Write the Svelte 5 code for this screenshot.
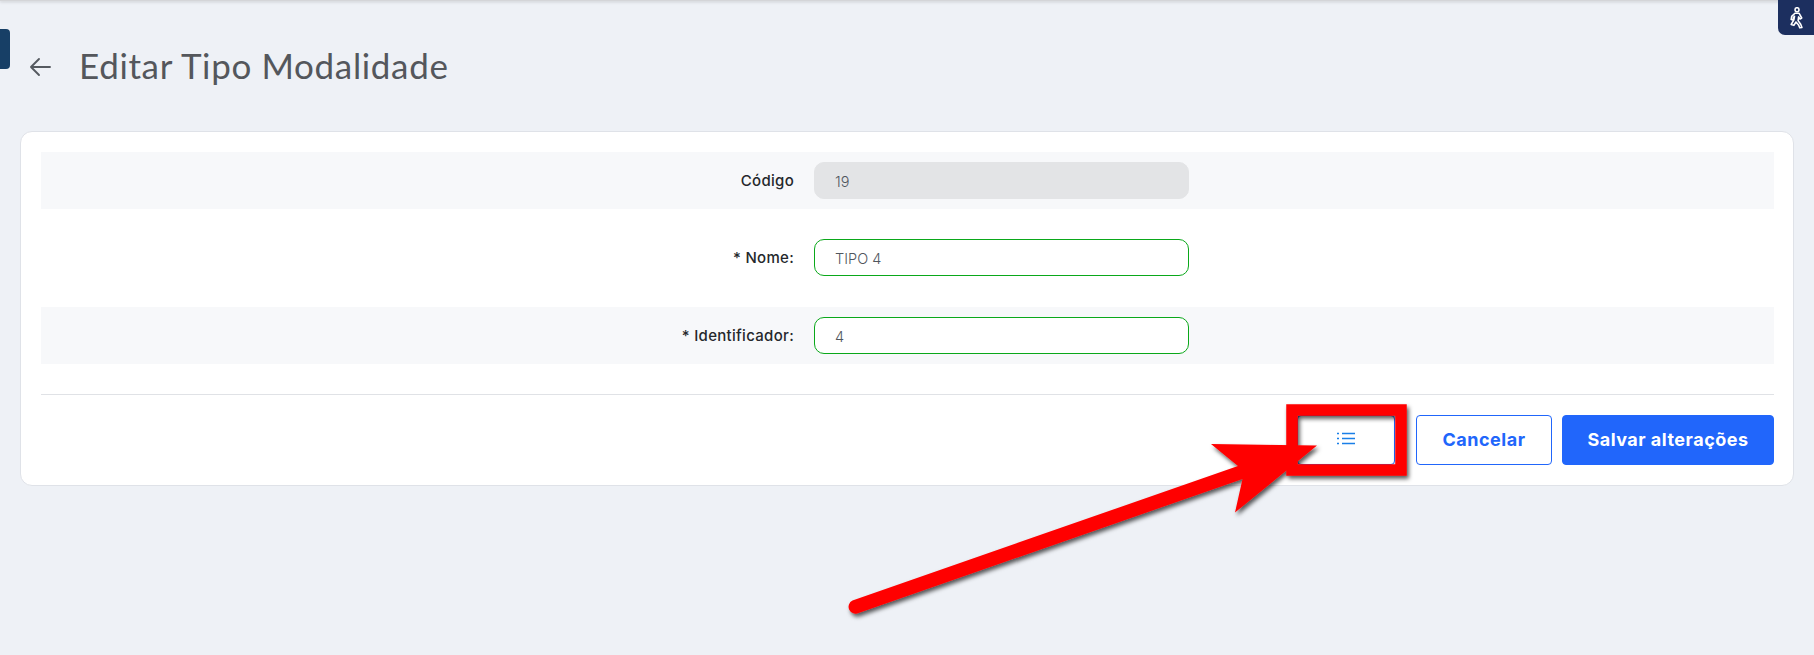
<script lang="ts">
  let fields = [
    { label: 'Código', value: '19', disabled: true, striped: true },
    { label: '* Nome:', value: 'TIPO 4', disabled: false, striped: false },
    { label: '* Identificador:', value: '4', disabled: false, striped: true },
  ];
</script>

<div class="page">
  <div class="topbar"></div>
  <div class="side-tab"></div>
  <div class="access-tab">
    <svg width="15" height="22" viewBox="0 0 14 21" fill="none" stroke="#fff" stroke-width="1.5" stroke-linejoin="round">
      <circle cx="7.5" cy="2.6" r="1.9" />
      <path d="M5.5 6h4l2.5 4.5-1.6 1-1.4-2-.5 3.5 2.5 3.5 1.2 3-2 .4-1.4-3-2.3-2.6-2 3.2-2.6-.8 2.6-4.4.6-3.4-1 1.2-.4 2.2-1.8-.3.5-3Z" />
    </svg>
  </div>

  <header class="title-row">
    <button class="back" aria-label="Voltar">
      <svg width="22" height="20" viewBox="0 0 22 20" fill="none" stroke="#555a60" stroke-width="1.9" stroke-linecap="round" stroke-linejoin="round">
        <path d="M21 10H2M10 2 2 10l8 8" />
      </svg>
    </button>
    <h1>Editar Tipo Modalidade</h1>
  </header>

  <section class="card">
    {#each fields as field}
      <div class="row" class:striped={field.striped}>
        <label for={field.label}>{field.label}</label>
        <input id={field.label} class:ok={!field.disabled} value={field.value} disabled={field.disabled} />
      </div>
    {/each}

    <div class="actions">
      <button class="btn btn-list" aria-label="Listar">
        <svg width="18" height="13" viewBox="0 0 18 13" fill="none" stroke="#1a7fe8" stroke-width="1.5">
          <path d="M5 1.5h13M5 6.5h13M5 11.5h13" />
          <path d="M0 1.5h2M0 6.5h2M0 11.5h2" />
        </svg>
      </button>
      <button class="btn btn-outline">Cancelar</button>
      <button class="btn btn-primary">Salvar alterações</button>
    </div>
  </section>

  <!-- annotation drawn over the screenshot -->
  <svg class="markup" width="1814" height="655" viewBox="0 0 1814 655">
    <defs>
      <filter id="shadow" x="-10%" y="-10%" width="120%" height="120%">
        <feDropShadow dx="2" dy="3" stdDeviation="2" flood-color="#000" flood-opacity="0.65" />
      </filter>
    </defs>
    <g filter="url(#shadow)">
      <rect x="1292" y="410" width="109" height="60" fill="none" stroke="#ff0000" stroke-width="11.5" />
      <path fill="#ff0000" d="M1317 445.5 1211 444 1238 466 852.5 600.5A6.5 6.5 0 0 0 858.5 613L1242.5 479 1235 512.5Z" />
    </g>
  </svg>
</div>

<style>
  :global(body) {
    margin: 0;
    background: #eef1f6;
  }

  .page {
    position: relative;
    height: 655px;
    overflow: hidden;
    font-family: Inter, "Liberation Sans", sans-serif;
  }

  .topbar {
    height: 1px;
    background: #d4d5d8;
    box-shadow: 0 1px 3px rgba(0, 0, 0, 0.25);
  }

  .side-tab {
    position: absolute;
    left: 0;
    top: 29px;
    width: 10px;
    height: 40px;
    background: #173f66;
    border-radius: 0 4px 4px 0;
  }

  .access-tab {
    position: absolute;
    right: 0;
    top: 0;
    width: 36px;
    height: 35px;
    display: flex;
    align-items: center;
    justify-content: center;
    background: #1c2f5f;
    border-radius: 0 0 0 7px;
  }

  .title-row {
    display: flex;
    align-items: center;
    height: 44px;
    margin-top: 42px;
    padding-left: 29px;
  }

  .back {
    display: flex;
    padding: 0;
    margin-top: 3px;
    margin-right: 28px;
    background: none;
    border: none;
  }

  h1 {
    margin: 0;
    font-family: Lato, sans-serif;
    font-size: 35px;
    font-weight: 400;
    letter-spacing: 0.65px;
    color: #54575c;
  }

  .card {
    margin: 44px 20px 0 20px;
    padding: 20px 19px 20px 20px;
    height: 313px;
    background: #fff;
    border: 1px solid #dfe2e8;
    border-radius: 12px;
  }

  .row {
    display: grid;
    grid-template-columns: 753px 375px;
    column-gap: 20px;
    align-items: center;
    height: 98px;
    padding-bottom: 2px;
    box-sizing: border-box;
  }

  .row.striped {
    height: 57px;
    padding-bottom: 0;
    background: #f7f8fa;
  }

  label {
    justify-self: end;
    font-size: 15px;
    font-weight: 500;
    letter-spacing: 0.3px;
    color: #25282c;
  }

  input {
    box-sizing: border-box;
    width: 100%;
    height: 37px;
    padding: 2px 20px 0;
    font-family: Inter, sans-serif;
    font-size: 14.5px;
    font-weight: 300;
    color: #50565e;
    background: #fff;
    border: 1px solid #e3e4e6;
    border-radius: 10px;
    opacity: 1;
  }

  input:disabled {
    background: #e3e4e6;
    color: #50565e;
  }

  input.ok {
    border-color: #0aa81a;
  }

  .actions {
    display: flex;
    justify-content: flex-end;
    gap: 10px;
    margin-top: 30px;
    padding-top: 20px;
    border-top: 1px solid #e0e2e6;
  }

  .btn {
    height: 50px;
    border-radius: 4px;
    font-family: Inter, sans-serif;
    font-size: 18px;
    font-weight: 700;
    letter-spacing: 0.5px;
  }

  .btn-list {
    display: flex;
    align-items: center;
    justify-content: center;
    width: 98px;
    margin-right: 11px;
    padding: 0 0 3px;
    background: #fff;
    border: 1px solid #2166fb;
  }

  .btn-outline {
    width: 136px;
    padding-bottom: 2px;
    color: #2166fb;
    background: #fff;
    border: 1px solid #2166fb;
  }

  .btn-primary {
    width: 212px;
    padding-bottom: 2px;
    color: #fff;
    background: #2166fb;
    border: 1px solid #2166fb;
  }

  .markup {
    position: absolute;
    left: 0;
    top: 0;
    pointer-events: none;
  }
</style>
